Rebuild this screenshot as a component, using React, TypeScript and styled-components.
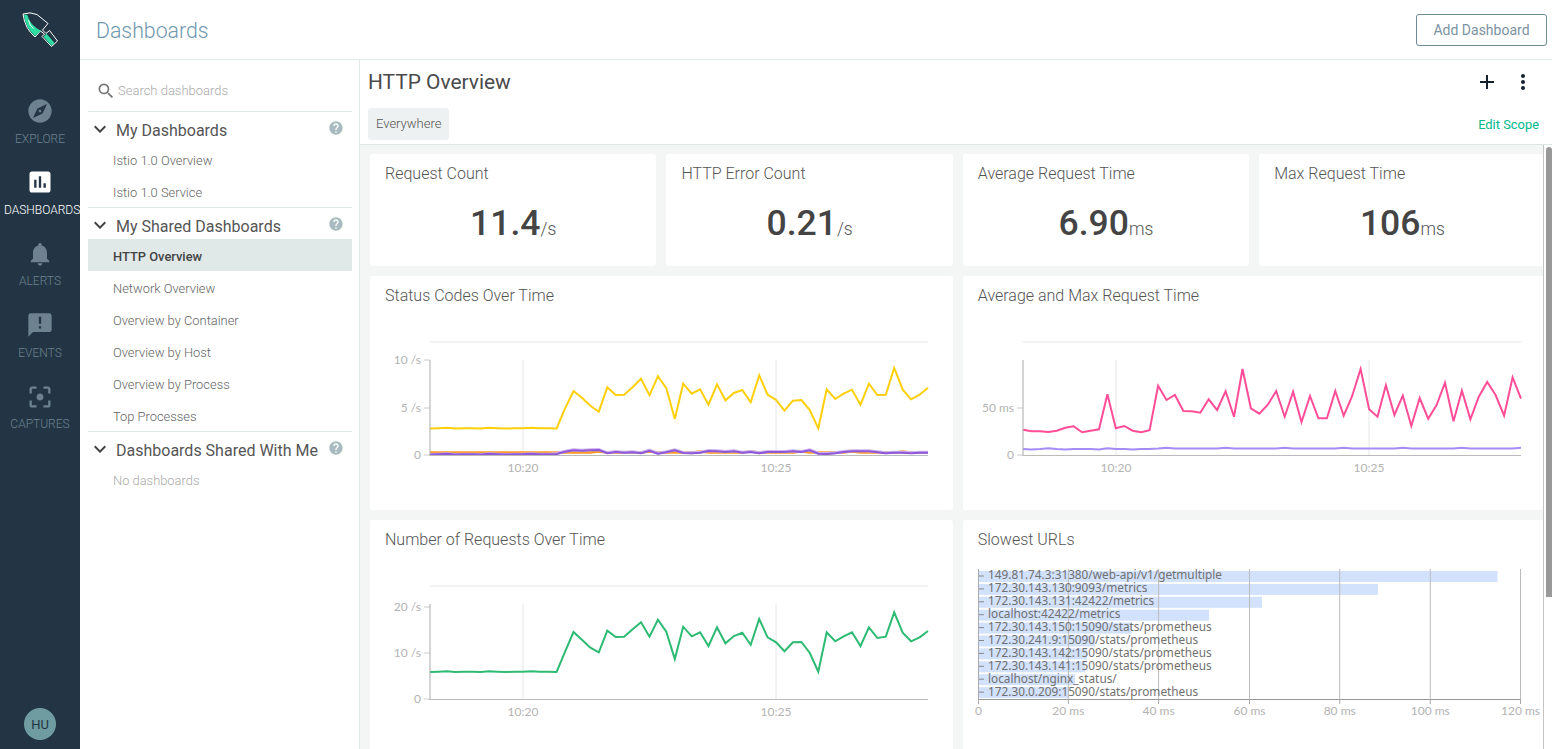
import React from 'react';
import styled, { createGlobalStyle } from 'styled-components';
import {
  MdAdd,
  MdAnnouncement,
  MdAssessment,
  MdExpandMore,
  MdExplore,
  MdFilterCenterFocus,
  MdHelp,
  MdMoreVert,
  MdNotifications,
  MdSearch,
} from 'react-icons/md';

const GlobalStyle = createGlobalStyle`
  html, body {
    margin: 0;
    height: 100%;
    overflow: hidden;
  }
  body {
    font-family: Roboto, "Liberation Sans", sans-serif;
    color: #555;
  }
  * {
    box-sizing: border-box;
  }
`;

const NAV_ITEMS = [
  { label: 'Explore', Icon: MdExplore },
  { label: 'Dashboards', Icon: MdAssessment, active: true },
  { label: 'Alerts', Icon: MdNotifications },
  { label: 'Events', Icon: MdAnnouncement },
  { label: 'Captures', Icon: MdFilterCenterFocus },
];

const SECTIONS = [
  { title: 'My Dashboards', items: ['Istio 1.0 Overview', 'Istio 1.0 Service'] },
  {
    title: 'My Shared Dashboards',
    items: [
      'HTTP Overview',
      'Network Overview',
      'Overview by Container',
      'Overview by Host',
      'Overview by Process',
      'Top Processes',
    ],
  },
  { title: 'Dashboards Shared With Me', items: [], empty: 'No dashboards' },
];

const STATS = [
  { title: 'Request Count', value: '11.4', unit: '/s' },
  { title: 'HTTP Error Count', value: '0.21', unit: '/s' },
  { title: 'Average Request Time', value: '6.90', unit: 'ms' },
  { title: 'Max Request Time', value: '106', unit: 'ms' },
];

// y positions of each line, one per sample, 60 samples
const flat = (n: number, base: number) =>
  Array.from({ length: n }, (_, i) => base + (i % 5 === 2 ? -0.4 : i % 3 === 0 ? 0.3 : 0));

const YELLOW = [
  ...flat(16, 108.2),
  ...[
    265, 213, 233, 257, 275, 202, 225, 224, 202, 176, 226, 169, 205, 297, 191, 221, 208, 254, 193, 241, 219, 210, 247,
    166, 224, 240, 272, 242, 240, 270, 325, 208, 237, 221, 209, 254, 191, 225, 224, 144, 209, 238, 224, 203,
  ].map((y) => y / 3),
];

const ORANGE = Array.from({ length: 60 }, (_, i) => (i > 17 && i % 6 === 2 ? 131.6 : 132.6));

const PURPLE = [
  ...flat(15, 134.2),
  ...[
    402, 395, 391, 392, 391, 390, 400, 396, 398, 397, 400, 392, 401, 397, 391, 399, 400, 398, 393, 394, 396, 394, 398,
    396, 400, 396, 396, 396, 394, 396, 391, 401, 402, 400, 396, 394, 394, 394, 397, 400, 398, 398, 400, 398, 398,
  ].map((y) => y / 3),
];

const LILAC = PURPLE.map((y, i) => (i < 15 ? y : y - 0.5));

const PINK = [
  329, 334, 334, 336, 332, 323, 319, 337, 332, 328, 223, 325, 318, 332, 337, 331, 197, 240, 225, 273, 274, 278, 238,
  270, 214, 290, 147, 265, 281, 254, 213, 290, 215, 306, 228, 295, 295, 213, 287, 228, 147, 268, 290, 196, 285, 227,
  318, 234, 296, 255, 188, 304, 212, 298, 230, 186, 226, 287, 172, 236,
].map((y) => y / 3);

const LAVENDER = Array.from(
  { length: 60 },
  (_, i) => 129 - (i % 7 === 3 ? 0.8 : 0) + (i < 16 && i % 4 === 1 ? 0.6 : 0) - (i > 15 ? 0.4 : 0),
);

const GREEN = [
  ...flat(16, 107.7),
  ...[
    245, 186, 209, 233, 247, 182, 201, 200, 178, 157, 200, 149, 185, 267, 170, 199, 187, 228, 172, 220, 198, 188, 224,
    147, 202, 217, 244, 217, 216, 249, 305, 187, 214, 199, 187, 228, 172, 204, 200, 127, 188, 214, 202, 183,
  ].map((y) => y / 3 + 6),
];

const SLOW_URLS = [
  { url: '149.81.74.3:31380/web-api/v1/getmultiple', end: 534.5 },
  { url: '172.30.143.130:9093/metrics', end: 415 },
  { url: '172.30.143.131:42422/metrics', end: 299 },
  { url: 'localhost:42422/metrics', end: 246 },
  { url: '172.30.143.150:15090/stats/prometheus', end: 169 },
  { url: '172.30.241.9:15090/stats/prometheus', end: 132 },
  { url: '172.30.143.142:15090/stats/prometheus', end: 124 },
  { url: '172.30.143.141:15090/stats/prometheus', end: 122 },
  { url: 'localhost/nginx_status/', end: 112 },
  { url: '172.30.0.209:15090/stats/prometheus', end: 106 },
];

const SLOW_TICKS = [
  { x: 15.5, label: '0' },
  { x: 105.4, label: '20 ms' },
  { x: 195.6, label: '40 ms' },
  { x: 286.5, label: '60 ms' },
  { x: 376.7, label: '80 ms' },
  { x: 467.3, label: '100 ms' },
  { x: 557.5, label: '120 ms' },
];

const PLOT_LEFT = 60;
const PLOT_RIGHT = 558;
const AXIS_Y = 135;

interface ChartLine {
  color: string;
  ys: number[];
  width?: number;
}

interface TimeChartProps {
  lines: ChartLine[];
  ticks: { y: number; label: string }[];
}

const toPoints = (ys: number[]) =>
  ys
    .map((y, i) => `${(PLOT_LEFT + (i * (PLOT_RIGHT - PLOT_LEFT)) / (ys.length - 1)).toFixed(1)},${y.toFixed(1)}`)
    .join(' ');

const TimeChart = ({ lines, ticks }: TimeChartProps) => (
  <ChartSvg viewBox="0 0 584 190">
    <line x1={PLOT_LEFT} x2={PLOT_RIGHT} y1={22} y2={22} stroke="#efefef" strokeWidth={1.5} />
    {[153, 406].map((x, i) => (
      <g key={x}>
        <line x1={x} x2={x} y1={40} y2={AXIS_Y} stroke="#e6e6e6" />
        <AxisText x={x} y={152} textAnchor="middle">
          {i === 0 ? '10:20' : '10:25'}
        </AxisText>
      </g>
    ))}
    {ticks.map((t) => (
      <g key={t.label}>
        <line x1={PLOT_LEFT - 6} x2={PLOT_LEFT} y1={t.y} y2={t.y} stroke="#ccc" />
        <AxisText x={PLOT_LEFT - 9} y={t.y + 4} textAnchor="end">
          {t.label}
        </AxisText>
      </g>
    ))}
    {lines.map((l) => (
      <polyline
        key={l.color}
        points={toPoints(l.ys)}
        fill="none"
        stroke={l.color}
        strokeWidth={l.width ?? 2}
        strokeLinejoin="miter"
      />
    ))}
    <line x1={PLOT_LEFT} x2={PLOT_LEFT} y1={40} y2={AXIS_Y + 1} stroke="#aaa" />
    <line x1={PLOT_LEFT} x2={PLOT_RIGHT} y1={AXIS_Y + 0.5} y2={AXIS_Y + 0.5} stroke="#bbb" />
  </ChartSvg>
);

const SlowestChart = () => (
  <ChartSvg viewBox="0 0 584 190">
    {SLOW_URLS.map((row, i) => (
      <rect key={row.url} x={15.5} y={7 + i * 12.9} width={row.end - 15.5} height={11} fill="#d2e1fc" />
    ))}
    {SLOW_TICKS.slice(1).map((t) => (
      <line key={t.x} x1={t.x} x2={t.x} y1={5} y2={AXIS_Y} stroke="#bbb" />
    ))}
    {SLOW_URLS.map((row, i) => (
      <g key={row.url}>
        <line x1={15.5} x2={21} y1={12 + i * 12.9} y2={12 + i * 12.9} stroke="#888" />
        <UrlText x={25} y={15.4 + i * 12.9}>
          {row.url}
        </UrlText>
      </g>
    ))}
    <line x1={15.5} x2={15.5} y1={5} y2={AXIS_Y + 1} stroke="#aaa" />
    <line x1={15.5} x2={557.5} y1={AXIS_Y + 0.5} y2={AXIS_Y + 0.5} stroke="#999" />
    {SLOW_TICKS.map((t) => (
      <g key={t.x}>
        <line x1={t.x} x2={t.x} y1={AXIS_Y} y2={AXIS_Y + 5} stroke="#aaa" />
        <AxisText x={t.x} y={151} textAnchor="middle">
          {t.label}
        </AxisText>
      </g>
    ))}
  </ChartSvg>
);

const Logo = () => (
  <LogoSvg viewBox="0 0 80 60">
    <path
      d="M23 14 Q30 11.5 37 14.5 L48 23.5 L42.5 30 L46 33.5 L49.5 30.5 L57.5 41 L51.5 46.5 L42 36.5 L44.5 34 L40.5 31 L35 37 Q25 29 23 14 Z"
      fill="#233544"
      stroke="#fff"
      strokeWidth={1}
      strokeLinejoin="round"
    />
    <path d="M24 15 Q26.5 14 27.5 15.5 Q30 25.5 41 30.7 L35 36 Q25.5 28 24 15 Z" fill="#2fdca4" />
    <path d="M28.5 20 Q29.5 26 33.5 28.5" fill="none" stroke="#fff" strokeWidth={0.9} />
    <path d="M43.5 36.5 L46.5 33.8 L54.5 43 L51.5 45.7 Z" fill="#2fdca4" />
  </LogoSvg>
);

const App = () => (
  <Page>
    <GlobalStyle />
    <Sidebar>
      <Logo />
      <Nav>
        {NAV_ITEMS.map(({ label, Icon, active }) => (
          <NavItem key={label} $active={active}>
            <Icon size={28} />
            <NavLabel>{label}</NavLabel>
          </NavItem>
        ))}
      </Nav>
      <Avatar>HU</Avatar>
    </Sidebar>
    <Main>
      <TopBar>
        <PageTitle>Dashboards</PageTitle>
        <AddButton>Add Dashboard</AddButton>
      </TopBar>
      <Body>
        <ListPanel>
          <SearchRow>
            <MdSearch size={20} color="#777" />
            <SearchInput placeholder="Search dashboards" />
          </SearchRow>
          {SECTIONS.map((section) => (
            <Section key={section.title}>
              <SectionHeader>
                <Chevron>
                  <MdExpandMore size={24} color="#444" />
                </Chevron>
                <SectionTitle>{section.title}</SectionTitle>
                <HelpIcon>
                  <MdHelp size={16} />
                </HelpIcon>
              </SectionHeader>
              {section.items.map((item) => (
                <ListItem key={item} $active={item === 'HTTP Overview'}>
                  {item}
                </ListItem>
              ))}
              {section.empty && <EmptyItem>{section.empty}</EmptyItem>}
            </Section>
          ))}
        </ListPanel>
        <Dashboard>
          <DashHeader>
            <TitleRow>
              <DashTitle>HTTP Overview</DashTitle>
              <HeaderIcons>
                <MdAdd size={24} />
                <MdMoreVert size={24} />
              </HeaderIcons>
            </TitleRow>
            <ScopeRow>
              <ScopeChip>Everywhere</ScopeChip>
              <EditScope>Edit Scope</EditScope>
            </ScopeRow>
          </DashHeader>
          <Scroller>
            <PanelGrid>
              {STATS.map((s) => (
                <StatCard key={s.title}>
                  <CardTitle>{s.title}</CardTitle>
                  <StatValue>
                    {s.value}
                    <StatUnit>{s.unit}</StatUnit>
                  </StatValue>
                </StatCard>
              ))}
              <ChartCard>
                <CardTitle>Status Codes Over Time</CardTitle>
                <TimeChart
                  lines={[
                    { color: '#ffcf0a', ys: YELLOW },
                    { color: '#ff9a24', ys: ORANGE, width: 2.5 },
                    { color: '#cdb4ee', ys: LILAC, width: 3 },
                    { color: '#8e58d8', ys: PURPLE },
                  ]}
                  ticks={[
                    { y: 40, label: '10 /s' },
                    { y: 88, label: '5 /s' },
                    { y: 135, label: '0' },
                  ]}
                />
              </ChartCard>
              <ChartCard>
                <CardTitle>Average and Max Request Time</CardTitle>
                <TimeChart
                  lines={[
                    { color: '#a58cf5', ys: LAVENDER },
                    { color: '#ff4d98', ys: PINK },
                  ]}
                  ticks={[
                    { y: 88, label: '50 ms' },
                    { y: 135, label: '0' },
                  ]}
                />
              </ChartCard>
              <ChartCard>
                <CardTitle>Number of Requests Over Time</CardTitle>
                <TimeChart
                  lines={[{ color: '#2dbb74', ys: GREEN }]}
                  ticks={[
                    { y: 43, label: '20 /s' },
                    { y: 89, label: '10 /s' },
                    { y: 135, label: '0' },
                  ]}
                />
              </ChartCard>
              <ChartCard>
                <CardTitle>Slowest URLs</CardTitle>
                <SlowestChart />
              </ChartCard>
            </PanelGrid>
            <ScrollTrack>
              <ScrollThumb />
            </ScrollTrack>
          </Scroller>
        </Dashboard>
      </Body>
    </Main>
  </Page>
);

const Page = styled.div`
  display: flex;
  width: 1552px;
  height: 749px;
  overflow: hidden;
`;

const Sidebar = styled.aside`
  display: flex;
  flex-direction: column;
  align-items: center;
  flex: 0 0 80px;
  width: 80px;
  background: #233544;
  overflow: hidden;
`;

const LogoSvg = styled.svg`
  display: block;
  flex: 0 0 60px;
  width: 80px;
  height: 60px;
`;

const Nav = styled.nav`
  display: flex;
  flex-direction: column;
  margin-top: 33px;
  width: 100%;
`;

const NavItem = styled.div<{ $active?: boolean }>`
  display: flex;
  flex-direction: column;
  align-items: center;
  height: 71.4px;
  padding-top: 4px;
  color: ${({ $active }) => ($active ? '#fff' : '#6d818f')};
`;

const NavLabel = styled.span`
  display: block;
  width: 100%;
  margin-top: 5.6px;
  padding: 0 4px;
  font-size: 12px;
  line-height: 16px;
  font-weight: 300;
  text-align: center;
  text-transform: uppercase;
  white-space: nowrap;
`;

const Avatar = styled.div`
  display: flex;
  align-items: center;
  justify-content: center;
  width: 32px;
  height: 32px;
  margin-top: auto;
  margin-bottom: 9px;
  border-radius: 50%;
  background: #6e9ca0;
  color: #233544;
  font-size: 13px;
`;

const Main = styled.div`
  display: flex;
  flex-direction: column;
  flex: 1;
  min-width: 0;
`;

const TopBar = styled.header`
  display: flex;
  align-items: center;
  justify-content: space-between;
  flex: 0 0 60px;
  padding: 0 5px 0 16px;
  border-bottom: 1px solid #e1e8e8;
`;

const PageTitle = styled.h1`
  margin: 1px 0 0;
  font-size: 21.3px;
  font-weight: 300;
  color: #6f97ae;
`;

const AddButton = styled.button`
  width: 131px;
  height: 32px;
  padding: 0;
  border: 1px solid #6f8b98;
  border-radius: 3px;
  background: #fff;
  color: #7c93a3;
  font-family: Roboto, sans-serif;
  font-size: 14px;
`;

const Body = styled.div`
  display: flex;
  flex: 1;
  min-height: 0;
`;

const ListPanel = styled.div`
  flex: 0 0 280px;
  padding: 0 7px 0 8px;
  border-right: 1px solid #e1e8e8;
`;

const SearchRow = styled.div`
  display: flex;
  align-items: center;
  gap: 2px;
  height: 51px;
  padding: 10px 0 0 8px;
`;

const SearchInput = styled.input`
  flex: 1;
  border: 0;
  outline: 0;
  padding: 0;
  font-family: Roboto, sans-serif;
  font-size: 13px;
  font-weight: 300;

  &::placeholder {
    color: #aaa;
    opacity: 1;
  }
`;

const Section = styled.section`
  border-top: 1px solid #e1e8e8;
`;

const SectionHeader = styled.div`
  display: flex;
  align-items: center;
  height: 31px;
  padding: 5px 8px 0 0;
`;

const Chevron = styled.span`
  display: flex;
  margin-top: -2px;
`;

const SectionTitle = styled.span`
  flex: 1;
  margin-left: 4px;
  font-size: 16px;
  color: #555;
  white-space: nowrap;
`;

const HelpIcon = styled.span`
  display: flex;
  margin-top: -4px;
  color: #a8bcc0;
`;

const ListItem = styled.div<{ $active?: boolean }>`
  height: 32px;
  padding-left: 25px;
  background: ${({ $active }) => ($active ? '#e1e9e8' : 'transparent')};
  color: ${({ $active }) => ($active ? '#444' : '#666')};
  font-size: 12.9px;
  font-weight: ${({ $active }) => ($active ? 500 : 300)};
  line-height: 36px;
`;

const EmptyItem = styled(ListItem)`
  color: #aaa;
`;

const Dashboard = styled.div`
  display: flex;
  flex-direction: column;
  flex: 1;
  min-width: 0;
`;

const DashHeader = styled.div`
  flex: 0 0 85px;
  padding: 0 13px 0 8px;
  border-bottom: 1px solid #dfe6e6;
`;

const TitleRow = styled.div`
  display: flex;
  align-items: center;
  justify-content: space-between;
  height: 44px;
`;

const DashTitle = styled.h2`
  margin: 0;
  font-size: 20.9px;
  font-weight: 400;
  color: #4a4a4a;
`;

const HeaderIcons = styled.div`
  display: flex;
  gap: 12px;
  margin-right: 4px;
  color: #14202e;
`;

const ScopeRow = styled.div`
  display: flex;
  align-items: center;
  justify-content: space-between;
  margin-top: 4px;
`;

const ScopeChip = styled.div`
  height: 32px;
  padding: 0 8px;
  border-radius: 3px;
  background: #eef1f1;
  color: #555;
  font-size: 13px;
  font-weight: 300;
  line-height: 32px;
`;

const EditScope = styled.a`
  color: #00b98a;
  font-size: 12.9px;
`;

const Scroller = styled.div`
  position: relative;
  flex: 1;
  min-height: 0;
  overflow: hidden;
  background: #f4f6f6;
`;

const ScrollTrack = styled.div`
  position: absolute;
  top: 0;
  right: 0;
  bottom: 0;
  width: 9px;
  padding: 2px 0 0 2px;
  border-left: 1px solid #c4c4c4;
  background: #fff;
`;

const ScrollThumb = styled.div`
  height: 450px;
  border-radius: 3px 3px 0 0;
  background: #999;
`;

const PanelGrid = styled.div`
  display: grid;
  grid-template-columns: repeat(4, 286.4px);
  grid-template-rows: 112px 234px 234px;
  gap: 10px;
  width: 1176px;
  margin-left: 10px;
  padding-top: 9px;
`;

const Card = styled.div`
  border-radius: 3px;
  background: #fff;
`;

const StatCard = styled(Card)`
  display: flex;
  flex-direction: column;
`;

const ChartCard = styled(Card)`
  grid-column: span 2;
  overflow: hidden;
`;

const CardTitle = styled.h3`
  height: 44px;
  margin: 0;
  padding: 10px 15px 0;
  color: #555;
  font-size: 16px;
  font-weight: 300;
  line-height: 20px;
`;

const StatValue = styled.div`
  margin-top: 3px;
  color: #444;
  font-size: 35.5px;
  font-weight: 500;
  line-height: 44px;
  text-align: center;
`;

const StatUnit = styled.span`
  color: #555;
  font-size: 17.5px;
  font-weight: 300;
`;

const ChartSvg = styled.svg`
  display: block;
  width: 584px;
  height: 190px;
`;

const AxisText = styled.text`
  fill: #b3b3b3;
  font-family: Lato, sans-serif;
  font-size: 12px;
`;

const UrlText = styled.text`
  fill: #707070;
  font-family: "Noto Sans", sans-serif;
  font-size: 11.8px;
`;

export default App;
